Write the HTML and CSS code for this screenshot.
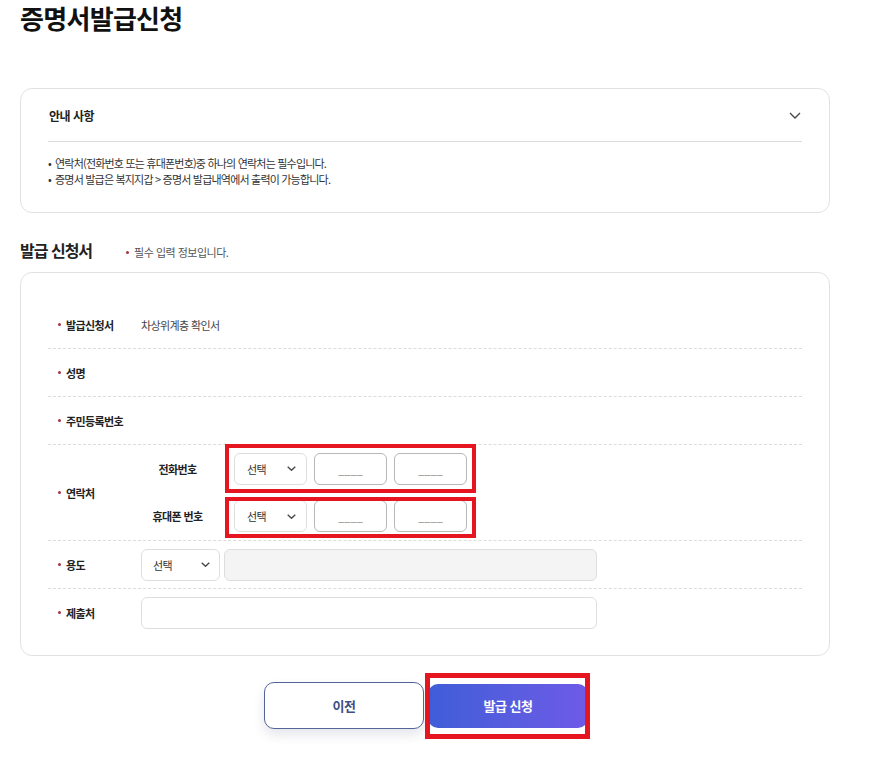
FILE: index.html
```html
<!DOCTYPE html>
<html lang="ko">
<head>
<meta charset="utf-8">
<title>증명서발급신청</title>
<link rel="stylesheet" href="styles.css">
</head>
<body>
<div class="page">
  <h1 class="title">증명서발급신청</h1>

  <section class="notice">
    <div class="notice-head">
      <span class="notice-title">안내 사항</span>
      <svg class="notice-chev" width="12" height="7" viewBox="0 0 12 7"><path d="M1 1l5 5 5-5" fill="none" stroke="#444" stroke-width="1.3"/></svg>
    </div>
    <ul class="notice-list">
      <li>연락처(전화번호 또는 휴대폰번호)중 하나의 연락처는 필수입니다.</li>
      <li>증명서 발급은 복지지갑 &gt; 증명서 발급내역에서 출력이 가능합니다.</li>
    </ul>
  </section>

  <div class="section-head">
    <h2 class="section-title">발급 신청서</h2>
    <p class="req-note"><span class="dot"></span>필수 입력 정보입니다.</p>
  </div>

  <section class="form-box">
    <div class="row">
      <div class="label"><span class="dot"></span>발급신청서</div>
      <div class="value">차상위계층 확인서</div>
    </div>
    <div class="row">
      <div class="label"><span class="dot"></span>성명</div>
    </div>
    <div class="row">
      <div class="label"><span class="dot"></span>주민등록번호</div>
    </div>
    <div class="row">
      <div class="label"><span class="dot"></span>연락처</div>
      <div class="sub-rows">
        <div class="sub-row sub-row-a">
          <div class="sub-label">전화번호</div>
          <div class="controls">
            <div class="select"><span>선택</span><svg width="9" height="5" viewBox="0 0 9 5"><path d="M0.7 0.7l3.8 3.6 3.8-3.6" fill="none" stroke="#444" stroke-width="1.3"/></svg></div>
            <input class="phone" type="text" placeholder="____">
            <input class="phone" type="text" placeholder="____">
            <span class="mark mark-a"></span>
          </div>
        </div>
        <div class="sub-row sub-row-b">
          <div class="sub-label">휴대폰 번호</div>
          <div class="controls">
            <div class="select"><span>선택</span><svg width="9" height="5" viewBox="0 0 9 5"><path d="M0.7 0.7l3.8 3.6 3.8-3.6" fill="none" stroke="#444" stroke-width="1.3"/></svg></div>
            <input class="phone" type="text" placeholder="____">
            <input class="phone" type="text" placeholder="____">
            <span class="mark mark-b"></span>
          </div>
        </div>
      </div>
    </div>
    <div class="row">
      <div class="label"><span class="dot"></span>용도</div>
      <div class="select select-use"><span>선택</span><svg width="9" height="5" viewBox="0 0 9 5"><path d="M0.7 0.7l3.8 3.6 3.8-3.6" fill="none" stroke="#444" stroke-width="1.3"/></svg></div>
      <input class="field field-gray" type="text" disabled>
    </div>
    <div class="row row-last">
      <div class="label"><span class="dot"></span>제출처</div>
      <input class="field field-wide" type="text">
    </div>
  </section>

  <div class="actions">
    <button class="btn btn-prev" type="button">이전</button>
    <div class="submit-wrap">
      <button class="btn btn-submit" type="button">발급 신청</button>
      <span class="mark mark-c"></span>
    </div>
  </div>
</div>
</body>
</html>
```

FILE: styles.css
```css
* { box-sizing: border-box; }

body {
  margin: 0;
  background: #fff;
  color: #222;
  font-family: "Noto Sans CJK KR", "Noto Sans", sans-serif;
}

.page {
  width: 810px;
  margin-left: 20px;
  padding-bottom: 40px;
}

.title {
  margin: 0;
  font-size: 26px;
  line-height: 36px;
  font-weight: 700;
  letter-spacing: -0.7px;
  color: #111;
}

/* notice box */
.notice {
  margin-top: 52px;
  border: 1px solid #e2e2e2;
  border-radius: 12px;
  padding: 0 27px 25px;
}

.notice-head {
  height: 53px;
  display: flex;
  align-items: center;
  justify-content: space-between;
  border-bottom: 1px solid #ddd;
}

.notice-title {
  padding-left: 1px;
  font-size: 12px;
  font-weight: 700;
  letter-spacing: -0.5px;
  color: #222;
}

.notice-chev { margin-right: 1px; }

.notice-list {
  list-style: none;
  margin: 0;
  padding: 13px 0 0;
  font-size: 11px;
  line-height: 16px;
  letter-spacing: -0.8px;
  color: #333;
}

.notice-list li::before {
  content: "•";
  display: inline-block;
  width: 7px;
}

/* section heading */
.section-head {
  display: flex;
  align-items: baseline;
  gap: 34px;
  margin: 25px 0 10px;
  height: 24px;
}

.section-title {
  margin: 0;
  font-size: 16px;
  line-height: 24px;
  font-weight: 700;
  letter-spacing: -1px;
  color: #222;
}

.req-note {
  margin: 0;
  font-size: 11px;
  letter-spacing: -0.5px;
  color: #555;
}

.dot {
  display: inline-block;
  width: 3px;
  height: 3px;
  border-radius: 50%;
  background: #a8323e;
  margin-right: 5px;
  flex: none;
}

.req-note .dot {
  vertical-align: 3px;
}

/* form */
.form-box {
  border: 1px solid #e2e2e2;
  border-radius: 12px;
  padding: 28px 27px 19px;
}

.row {
  display: flex;
  align-items: center;
  min-height: 48px;
  border-bottom: 1px dashed #dcdcdc;
}

.row-last {
  border-bottom: 0;
  min-height: 47px;
}

.label {
  width: 93px;
  flex: none;
  padding-left: 10px;
  display: flex;
  align-items: center;
  font-size: 11px;
  font-weight: 700;
  letter-spacing: -0.6px;
  color: #222;
}

.value {
  font-size: 11px;
  letter-spacing: -0.6px;
  color: #444;
}

.sub-rows {
  display: flex;
  flex-direction: column;
}

.sub-row {
  display: flex;
  align-items: center;
}

.sub-row-a { height: 47px; }
.sub-row-b { height: 48px; }

.sub-label {
  width: 73px;
  text-align: center;
  font-size: 11px;
  font-weight: 700;
  letter-spacing: -0.6px;
  color: #222;
}

.controls {
  position: relative;
  display: flex;
  gap: 7px;
  margin-left: 20px;
}

.select {
  width: 73px;
  height: 32px;
  border: 1px solid #dedede;
  border-radius: 6px;
  padding: 0 10px 0 12px;
  display: flex;
  align-items: center;
  justify-content: space-between;
  font-size: 11px;
  letter-spacing: -0.5px;
  color: #333;
  background: #fff;
}

.select-use {
  width: 79px;
  padding: 0 9px 0 11px;
}

.phone {
  width: 73px;
  height: 32px;
  margin: 0;
  border: 1px solid #b8b8b8;
  border-radius: 6px;
  padding: 0;
  font-family: inherit;
  font-size: 11px;
  text-align: center;
  background: #fff;
}

.phone::placeholder {
  color: #8a8a8a;
  opacity: 1;
}

.field {
  height: 32px;
  margin: 0;
  border: 1px solid #dedede;
  border-radius: 6px;
  font-family: inherit;
  font-size: 11px;
  background: #fff;
}

.field-gray {
  width: 373px;
  margin-left: 4px;
  background: #f4f4f4;
}

.field-wide {
  width: 456px;
}

/* annotation boxes */
.mark {
  position: absolute;
  border: 4px solid #e5161f;
  pointer-events: none;
}

.mark-a { left: -9px; right: -9px; top: -9px; bottom: -8px; }
.mark-b { left: -9px; right: -9px; top: -3px; bottom: -6px; }

/* actions */
.actions {
  display: flex;
  justify-content: center;
  align-items: center;
  gap: 4px;
  margin-top: 26px;
  padding-left: 2px;
}

.btn {
  width: 160px;
  border-radius: 10px;
  font-family: inherit;
  font-size: 13px;
  font-weight: 700;
  letter-spacing: -0.5px;
  cursor: pointer;
}

.btn-prev {
  height: 47px;
  border: 1px solid #53649b;
  background: #fff;
  color: #3f4f86;
  box-shadow: 0 6px 12px rgba(40, 50, 90, 0.12);
}

.submit-wrap {
  position: relative;
  display: flex;
}

.btn-submit {
  height: 44px;
  border: 0;
  color: #fff;
  background: linear-gradient(90deg, #3f5dd8 0%, #5a5de0 55%, #6e5ae8 100%);
}

.mark-c {
  border-width: 5px;
  left: -3px;
  right: -2px;
  top: -11px;
  bottom: -11px;
}
```
